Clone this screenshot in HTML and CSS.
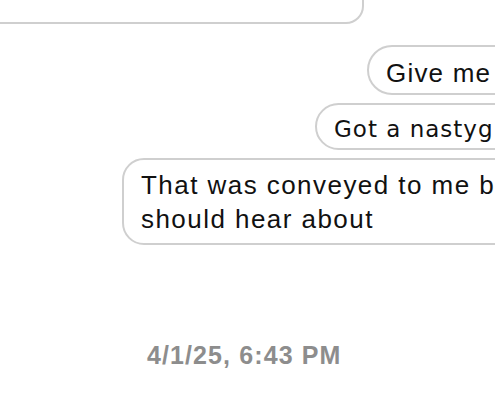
FILE: index.html
```html
<!DOCTYPE html>
<html lang="en">

<head>
    <meta charset="UTF-8">
    <meta name="viewport" content="width=device-width, initial-scale=1.0">
    <title>Messages</title>
    <link rel="stylesheet" href="styles.css">
</head>

<body>
    <main class="thread">
        <div class="bubble bubble-prev"></div>
        <div class="row">
            <div class="bubble give">Give me</div>
        </div>
        <div class="row">
            <div class="bubble got alt">Got a nastyg</div>
        </div>
        <div class="row">
            <div class="bubble multi">That was conveyed to me b<br>should hear about</div>
        </div>
        <p class="stamp">4/1/25, 6:43 PM</p>
    </main>
</body>

</html>
```

FILE: styles.css
```css
body {
    margin: 0;
    background-color: #ffffff;
    font-family: "Liberation Sans", Arial, sans-serif;
    color: #111111;
    overflow: hidden;
    width: 495px;
    height: 400px;
}

.thread {
    display: flex;
    flex-direction: column;
}

.bubble {
    border: 2px solid #cfcfcf;
    border-radius: 26px;
    font-size: 26px;
    line-height: 34px;
    letter-spacing: 1.45px;
    padding: 9px 60px 3px 17px;
    white-space: nowrap;
    background: #fff;
}

.bubble-prev {
    height: 60px;
    width: 380px;
    margin-top: -40px;
    margin-left: -20px;
    padding: 0;
    border-radius: 18px;
}

.row {
    display: flex;
    margin-top: 8px;
}

.give {
    margin-left: 367px;
    margin-top: 13px;
    letter-spacing: 1.2px;
}

.got {
    margin-left: 315px;
    padding-top: 7px;
    padding-bottom: 2px;
}

.alt {
    font-family: "DejaVu Sans", sans-serif;
    font-size: 23px;
    letter-spacing: 1px;
}

.multi {
    margin-left: 122px;
    padding-top: 8px;
    padding-bottom: 7px;
    border-radius: 22px;
}

.stamp {
    margin: 96px 0 0 147px;
    font-size: 25px;
    font-weight: bold;
    color: #8d8d8d;
    letter-spacing: 1.1px;
}
```
